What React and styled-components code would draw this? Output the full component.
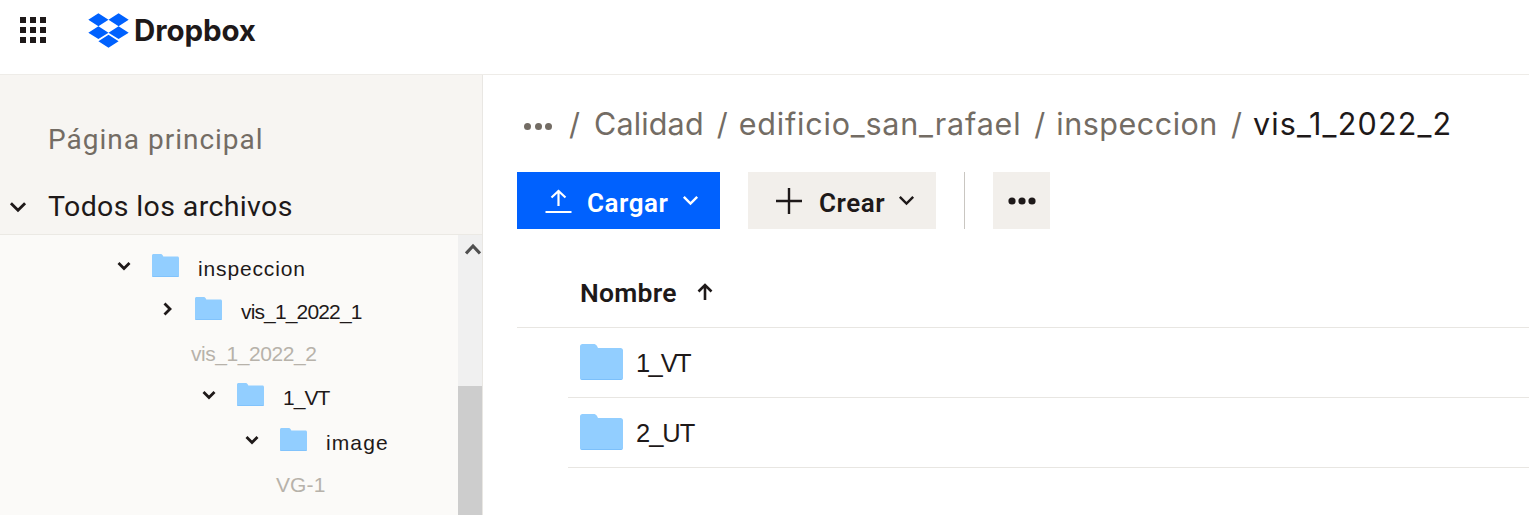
import React from 'react';
import styled, { createGlobalStyle } from 'styled-components';

const Global = createGlobalStyle`
  html, body { margin: 0; padding: 0; background: #fff; overflow: hidden; }
  * { box-sizing: border-box; }
  body { font-family: "Liberation Sans", Arial, sans-serif; color: #1e1919; }
`;
const Page = styled.div`width: 1529px; height: 515px; display: flex; flex-direction: column; overflow: hidden;`;
const Header = styled.header`height: 75px; flex: none; display: flex; align-items: flex-start; padding: 13px 0 0 20px; border-bottom: 1px solid #eeece8; background: #fff;`;
const Grid = styled.div`display: grid; grid-template-columns: repeat(3, 6px); gap: 4px; margin-top: 4px; width: 26px;`;
const Dot = styled.span`width: 6px; height: 6px; background: #1e1919;`;
const Logo = styled.div`display: flex; align-items: center; margin-left: 42px; gap: 5px; height: 34px;`;
const LogoText = styled.span`font-family: Inter, sans-serif; font-weight: 700; font-size: 29.5px; letter-spacing: -0.1px; color: #1e1919; line-height: 34px;`;
const Body = styled.div`flex: 1; display: flex; min-height: 0;`;
const Side = styled.aside`width: 483px; flex: none; border-right: 1px solid #e9e7e3; display: flex; flex-direction: column; background: #f7f5f2;`;
const SideTop = styled.div`height: 160px; flex: none; border-bottom: 1px solid #ebe9e4; padding-left: 48px;`;
const Home = styled.div`font-family: Roboto, sans-serif; font-size: 28px; line-height: 36px; padding-top: 47px; color: #736c64; letter-spacing: 1px; height: 114px;`;
const AllFiles = styled.div`position: relative; font-family: Roboto, sans-serif; font-size: 28.5px; line-height: 36px; color: #1e1919; letter-spacing: .38px;`;
const AllChevron = styled.span`position: absolute; left: -39px; top: 9px; display: flex;`;
const TreeWrap = styled.div`flex: 1; display: flex; min-height: 0; background: #fbfaf8;`;
const Tree = styled.div`flex: 1; padding-top: 12px;`;
const Row = styled.div`height: ${p => p.$h}px; display: flex; align-items: flex-start; padding-left: ${p => p.$indent}px;`;
const Chevron = styled.span`width: 14px; height: 14px; display: flex; margin-top: 12px; margin-right: 21px; color: #1e1919;`;
const SmallFolder = styled.span`width: 27px; height: 23px; display: flex; margin-top: 7px; margin-right: 19px;`;
const TreeLabel = styled.span`font-size: 21px; line-height: 24px; margin-top: 10px; letter-spacing: ${p => p.$ls}px; color: ${p => p.$muted ? '#b7b2aa' : '#1e1919'};`;
const Scrollbar = styled.div`width: 24px; flex: none; background: #f0f0f0; display: flex; flex-direction: column;`;
const ScrollArrow = styled.div`height: 151px; flex: none; display: flex; justify-content: flex-end; padding: 8px 1px 0 0; color: #505050;`;
const Thumb = styled.div`flex: 1; background: #cdcdcd;`;
const Main = styled.main`flex: 1; padding: 0 0 0 34px; min-width: 0;`;
const Crumbs = styled.nav`height: 97px; display: flex; align-items: flex-start; padding: 29px 0 0 7px; font-family: Inter, sans-serif; font-size: 30.5px; line-height: 40px; color: #736c64; white-space: nowrap;`;
const CrumbDots = styled.span`display: flex; gap: 3.5px; margin-top: 19px; margin-right: 17px;`;
const CrumbDot = styled.i`width: 7px; height: 7px; border-radius: 50%; background: #736c64; display: block;`;
const Sep = styled.span`margin-right: ${p => p.$mr || 11}px;`;
const Crumb = styled.span`margin-right: 13px; letter-spacing: ${p => p.$ls || 0}px; color: ${p => p.$current ? '#1e1919' : '#736c64'};`;
const Toolbar = styled.div`display: flex; align-items: stretch; height: 57px;`;
const Btn = styled.button`border: 0; height: 57px; width: ${p => p.$w}px; margin-right: ${p => p.$mr || 0}px; background: ${p => p.$primary ? '#0061fe' : '#f2efeb'}; color: ${p => p.$primary ? '#fff' : '#1e1919'}; display: flex; align-items: center; justify-content: ${p => p.$center ? 'center' : 'flex-start'}; padding: 0 0 0 ${p => p.$center ? 0 : 28}px; font-family: Roboto, sans-serif; font-weight: 600; font-size: 26px;`;
const BtnLabel = styled.span`margin: 4px 13px 0 ${p => p.$ml}px; letter-spacing: .55px;`;
const VLine = styled.div`width: 1px; background: #c9c6c1; margin-right: 28px;`;
const TableHead = styled.div`height: 99px; border-bottom: 1px solid #e8e6e2; display: flex; align-items: flex-start; padding: 47px 0 0 63px; font-family: Roboto, sans-serif; font-weight: 600; font-size: 26.5px; line-height: 34px; letter-spacing: .25px;`;
const SortIcon = styled.span`display: flex; margin: 7px 0 0 19px;`;
const FileRow = styled.div`height: 70px; margin-left: 51px; border-bottom: 1px solid #e8e6e2; display: flex; align-items: flex-start; padding: 16px 0 0 12px;`;
const BigFolder = styled.span`width: 43px; height: 36px; display: flex;`;
const FileName = styled.span`font-size: 25.5px; line-height: 36px; margin-left: 13px; letter-spacing: ${p => p.$ls}px; position: relative; top: 1px;`;

const FolderSvg = () => (
  <svg width="100%" height="100%" viewBox="0 0 43 36" preserveAspectRatio="none">
    <path d="M2.5 0H13.5C15 0 16 .5 17 2L18 4H40.5C42 4 43 5 43 6.5V33.5C43 35 42 36 40.5 36H2.5C1 36 0 35 0 33.5V2.5C0 1 1 0 2.5 0Z" fill="#92ceff" />
    <path d="M0 33.5V34C0 35 1 36 2.5 36H40.5C42 36 43 35 43 34V33.5C43 34.5 42 35 40.5 35H2.5C1 35 0 34.5 0 33.5Z" fill="#7cc0fb" />
  </svg>
);
const Down = ({ size = 14, w = 2.8 }) => (
  <svg width={size} height={size} viewBox="0 0 14 14" fill="none" stroke="currentColor" strokeWidth={w}><path d="M1.5 4L7 9.5L12.5 4" /></svg>
);
const Right = () => (
  <svg width="14" height="14" viewBox="0 0 14 14" fill="none" stroke="currentColor" strokeWidth="2.8"><path d="M4.5 1.5L10 7L4.5 12.5" /></svg>
);
const rows = [
  { indent: 117, ch: 'd', label: 'inspeccion', ls: .85, h: 42.5 },
  { indent: 160, ch: 'r', label: 'vis_1_2022_1', ls: -.85, h: 42 },
  { indent: 191, label: 'vis_1_2022_2', muted: true, ls: -.45, h: 44.5 },
  { indent: 202, ch: 'd', label: '1_VT', ls: -.95, h: 45 },
  { indent: 245, ch: 'd', label: 'image', ls: 1.1, h: 42 },
  { indent: 276, label: 'VG-1', muted: true, ls: .1, h: 42 },
];

export default function App() {
  return (
    <Page>
      <Global />
      <Header>
        <Grid>{Array.from({ length: 9 }).map((_, i) => <Dot key={i} />)}</Grid>
        <Logo>
          <svg width="41" height="35" viewBox="0 1.6 24 20.8" fill="#0061fe"><path d="M6 1.807L0 5.629l6 3.822 6.001-3.822L6 1.807zM18 1.807l-6 3.822 6 3.822 6-3.822-6-3.822zM0 13.274l6 3.822 6.001-3.822L6 9.452l-6 3.822zM18 9.452l-6 3.822 6 3.822 6-3.822-6-3.822zM6 18.371l6.001 3.822 6-3.822-6-3.822L6 18.371z" /></svg>
          <LogoText>Dropbox</LogoText>
        </Logo>
      </Header>
      <Body>
        <Side>
          <SideTop>
            <Home>Página principal</Home>
            <AllFiles>
              <AllChevron><Down size={18} w={2.2} /></AllChevron>
              Todos los archivos
            </AllFiles>
          </SideTop>
          <TreeWrap>
            <Tree>
              {rows.map(r => (
                <Row key={r.label} $indent={r.indent} $h={r.h}>
                  {r.ch && <Chevron>{r.ch === 'd' ? <Down /> : <Right />}</Chevron>}
                  {r.ch && <SmallFolder><FolderSvg /></SmallFolder>}
                  <TreeLabel $muted={r.muted} $ls={r.ls}>{r.label}</TreeLabel>
                </Row>
              ))}
            </Tree>
            <Scrollbar>
              <ScrollArrow>
                <svg width="16" height="12" viewBox="0 0 16 12" fill="none" stroke="currentColor" strokeWidth="3.2"><path d="M1 10.500L8 3L15 10.500" /></svg>
              </ScrollArrow>
              <Thumb />
            </Scrollbar>
          </TreeWrap>
        </Side>
        <Main>
          <Crumbs>
            <CrumbDots><CrumbDot /><CrumbDot /><CrumbDot /></CrumbDots>
            <Sep $mr={14}>/</Sep><Crumb $ls={.15}>Calidad</Crumb>
            <Sep>/</Sep><Crumb $ls={.8}>edificio_san_rafael</Crumb>
            <Sep>/</Sep><Crumb $ls={.5}>inspeccion</Crumb>
            <Sep>/</Sep><Crumb $current $ls={1.2}>vis_1_2022_2</Crumb>
          </Crumbs>
          <Toolbar>
            <Btn $primary $w={203} $mr={28}>
              <svg width="27" height="26" viewBox="0 0 26 26" fill="none" stroke="#fff" strokeWidth="2.2"><path d="M13 18V3M6 9.5L13 3L20 9.5M0 24H26" /></svg>
              <BtnLabel $ml={15}>Cargar</BtnLabel>
              <Down size={17} w={2} />
            </Btn>
            <Btn $w={188} $mr={28}>
              <svg width="26" height="26" viewBox="0 0 26 26" fill="none" stroke="#1e1919" strokeWidth="2.4"><path d="M13 0V26M0 13H26" /></svg>
              <BtnLabel $ml={17}>Crear</BtnLabel>
              <Down size={17} w={2} />
            </Btn>
            <VLine />
            <Btn $w={57} $center>
              <svg width="28" height="8" viewBox="0 0 28 8" fill="#1e1919"><circle cx="4" cy="4" r="3.6" /><circle cx="14" cy="4" r="3.6" /><circle cx="24" cy="4" r="3.6" /></svg>
            </Btn>
          </Toolbar>
          <TableHead>
            Nombre
            <SortIcon>
              <svg width="18" height="18" viewBox="0 0 18 18" fill="none" stroke="#1e1919" strokeWidth="2.6"><path d="M9 17V2M2.500 8.500L9 2L15.500 8.500" /></svg>
            </SortIcon>
          </TableHead>
          <FileRow><BigFolder><FolderSvg /></BigFolder><FileName $ls={-1.8}>1_VT</FileName></FileRow>
          <FileRow><BigFolder><FolderSvg /></BigFolder><FileName $ls={-1}>2_UT</FileName></FileRow>
        </Main>
      </Body>
    </Page>
  );
}
